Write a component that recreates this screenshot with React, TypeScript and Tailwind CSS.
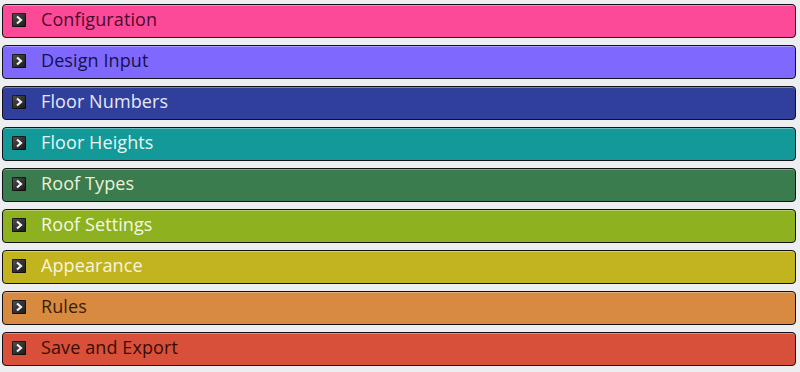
import React from 'react';

interface Section {
  label: string;
  bar: string;
  text: string;
}

const SECTIONS: Section[] = [
  { label: 'Configuration', bar: 'bg-[#fd4a98]', text: 'text-[#4a0b2c]' },
  { label: 'Design Input', bar: 'bg-[#7f68fd]', text: 'text-[#15124a]' },
  { label: 'Floor Numbers', bar: 'bg-[#2f3f9b]', text: 'text-[#e6e8f6]' },
  { label: 'Floor Heights', bar: 'bg-[#139a98]', text: 'text-[#e6f6f4]' },
  { label: 'Roof Types', bar: 'bg-[#3b7c4e]', text: 'text-[#eef0d8]' },
  { label: 'Roof Settings', bar: 'bg-[#8eb21f]', text: 'text-[#f4f8e4]' },
  { label: 'Appearance', bar: 'bg-[#c2b41e]', text: 'text-[#f8f4dc]' },
  { label: 'Rules', bar: 'bg-[#d88b40]', text: 'text-[#3a1d08]' },
  { label: 'Save and Export', bar: 'bg-[#d9503a]', text: 'text-[#3a0c06]' },
];

function ExpandIcon() {
  return (
    <span className="flex h-[14px] w-[14px] shrink-0 items-center justify-center rounded-[1px] bg-gradient-to-br from-[#505050] to-[#1a1a1a] shadow-[inset_0_0_0_1px_rgba(0,0,0,0.6)]">
      <svg width="10" height="10" viewBox="0 0 10 10">
        <path d="M3 1.5 L7 5 L3 8.5" fill="none" stroke="#f2f2f2" strokeWidth="2.2" strokeLinejoin="miter" />
      </svg>
    </span>
  );
}

export default function App() {
  return (
    <div className="flex h-[372px] w-[800px] flex-col gap-[7px] bg-[#eceef0] px-[2px] pt-[4px]" style={{ fontFamily: '"Open Sans", "Noto Sans", sans-serif' }}>
      {SECTIONS.map((s) => (
        <div
          key={s.label}
          className={`flex h-[34px] w-[794px] items-center gap-[15px] rounded-[4px] border border-[#141018] pb-[2px] pl-[9px] shadow-[inset_0_1px_0_rgba(255,255,255,0.35)] ${s.bar}`}
        >
          <ExpandIcon />
          <span className={`-mt-[3px] text-[18px] leading-none tracking-[0.1px] ${s.text}`}>{s.label}</span>
        </div>
      ))}
    </div>
  );
}
